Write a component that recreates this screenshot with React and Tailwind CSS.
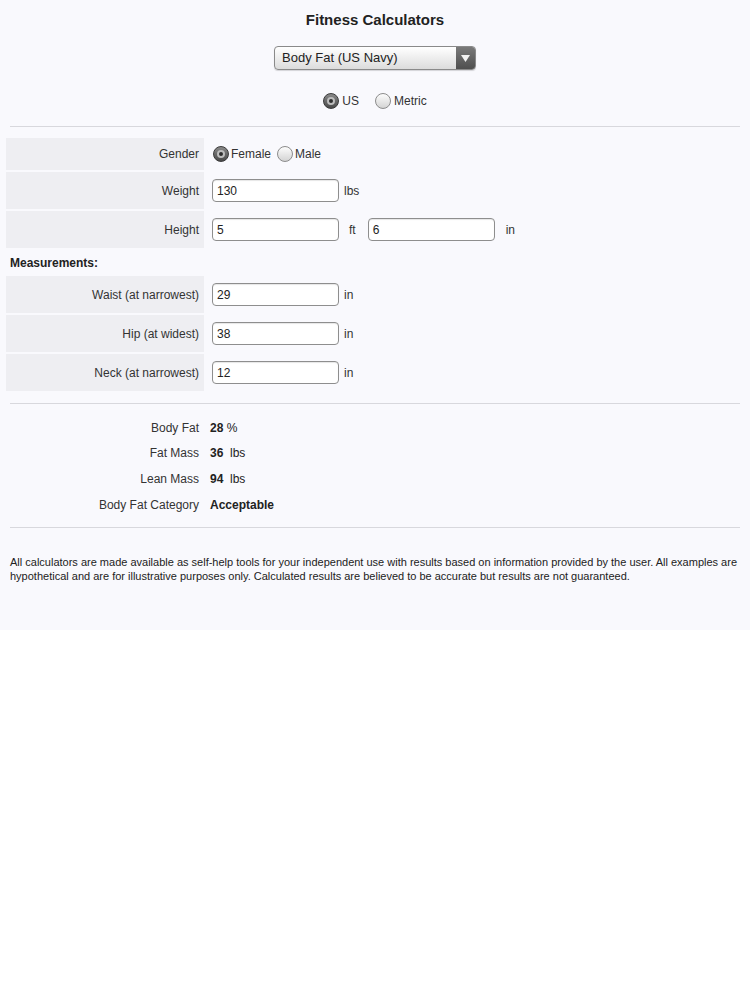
import React from "react";

const Radio = ({ checked }) =>
  checked ? (
    <span className="relative inline-flex h-[16px] w-[16px] shrink-0 items-center justify-center rounded-full border border-[#3a3a3a] bg-gradient-to-b from-[#8a8a8a] to-[#4a4a4a]">
      <span className="h-[8px] w-[8px] rounded-full border-2 border-[#bdbdbd] bg-[#2e2e2e]" />
    </span>
  ) : (
    <span className="inline-block h-[16px] w-[16px] shrink-0 rounded-full border border-[#8c8c8c] bg-gradient-to-b from-[#fdfdfd] to-[#d4d4d4]" />
  );

const Input = ({ value }) => (
  <div className="flex h-[23px] w-[127px] items-center rounded-[4px] border border-[#8e8e8e] bg-white pl-[4px] text-[12px] text-[#222] shadow-[inset_0_1px_1px_rgba(0,0,0,0.1)]">
    {value}
  </div>
);

const Row = ({ label, h = "h-[37px]", children }) => (
  <div className={`flex ${h}`}>
    <div className="ml-[6px] flex w-[198px] items-center justify-end bg-[#eeeef2] pr-[5px] text-[#333]">
      {label}
    </div>
    <div className="flex items-center pl-[8px]">{children}</div>
  </div>
);

const Result = ({ label, children }) => (
  <div className="flex h-[25.6px] items-center">
    <div className="ml-[6px] w-[198px] pr-[5px] text-right text-[#333]">{label}</div>
    <div className="pl-[6px] text-[#222]">{children}</div>
  </div>
);

const Hr = ({ className }) => (
  <div className={`mx-[10px] border-t border-[#d8d8dd] ${className}`} />
);

export default function App() {
  return (
    <div
      className="bg-[#f9f9fd] pt-[10px] pb-[47px] text-[12px] text-[#333]"
      style={{ fontFamily: '"Liberation Sans", Arial, sans-serif' }}
    >
      <h1 className="text-center text-[15px] font-bold leading-[20px] text-[#222]">
        Fitness Calculators
      </h1>

      {/* select */}
      <div className="mt-[16px] flex justify-center">
        <div className="flex h-[24px] w-[202px] overflow-hidden rounded-[4px] border border-[#8a8a8a] bg-gradient-to-b from-[#ffffff] to-[#dcdcdc] shadow-[0_1px_1px_rgba(0,0,0,0.15)]">
          <div className="flex flex-1 items-center pl-[7px] text-[13px] text-[#222]">
            Body Fat (US Navy)
          </div>
          <div className="flex w-[19px] items-center justify-center bg-gradient-to-b from-[#7a7a7a] to-[#4f4f4f]">
            <svg width="9" height="7" viewBox="0 0 9 7">
              <path d="M0 0 H9 L4.5 7 Z" fill="#f2f2f2" />
            </svg>
          </div>
        </div>
      </div>

      {/* units */}
      <div className="mt-[22px] flex justify-center">
        <div className="flex items-center gap-[3px]">
          <Radio checked />
          <span>US</span>
        </div>
        <div className="ml-[16px] flex items-center gap-[3px]">
          <Radio />
          <span>Metric</span>
        </div>
      </div>

      <Hr className="mt-[16px]" />

      <div className="mt-[11px] flex flex-col gap-[2px]">
        <Row label="Gender" h="h-[32px]">
          <div className="flex items-center pl-[1px]">
            <Radio checked />
            <span className="ml-[2px]">Female</span>
            <span className="ml-[6px]" />
            <Radio />
            <span className="ml-[2px]">Male</span>
          </div>
        </Row>
        <Row label="Weight">
          <Input value="130" />
          <span className="ml-[5px]">lbs</span>
        </Row>
        <Row label="Height">
          <Input value="5" />
          <span className="ml-[10px]">ft</span>
          <span className="ml-[12px]" />
          <Input value="6" />
          <span className="ml-[11px]">in</span>
        </Row>
      </div>

      <div className="mt-[7px] pl-[10px] font-bold leading-[16px] text-[#222]">
        Measurements:
      </div>

      <div className="mt-[5px] flex flex-col gap-[2px]">
        <Row label="Waist (at narrowest)">
          <Input value="29" />
          <span className="ml-[5px]">in</span>
        </Row>
        <Row label="Hip (at widest)">
          <Input value="38" />
          <span className="ml-[5px]">in</span>
        </Row>
        <Row label="Neck (at narrowest)">
          <Input value="12" />
          <span className="ml-[5px]">in</span>
        </Row>
      </div>

      <Hr className="mt-[12px]" />

      <div className="mt-[11px]">
        <Result label="Body Fat">
          <b>28</b> %
        </Result>
        <Result label="Fat Mass">
          <b>36</b>&nbsp; lbs
        </Result>
        <Result label="Lean Mass">
          <b>94</b>&nbsp; lbs
        </Result>
        <Result label="Body Fat Category">
          <b>Acceptable</b>
        </Result>
      </div>

      <Hr className="mt-[10px]" />

      <p className="mt-[27px] px-[10px] text-[11px] leading-[14px] text-[#222]">
        All calculators are made available as self-help tools for your independent use with
        results based on information provided by the user. All examples are hypothetical and
        are for illustrative purposes only. Calculated results are believed to be accurate but
        results are not guaranteed.
      </p>
    </div>
  );
}
